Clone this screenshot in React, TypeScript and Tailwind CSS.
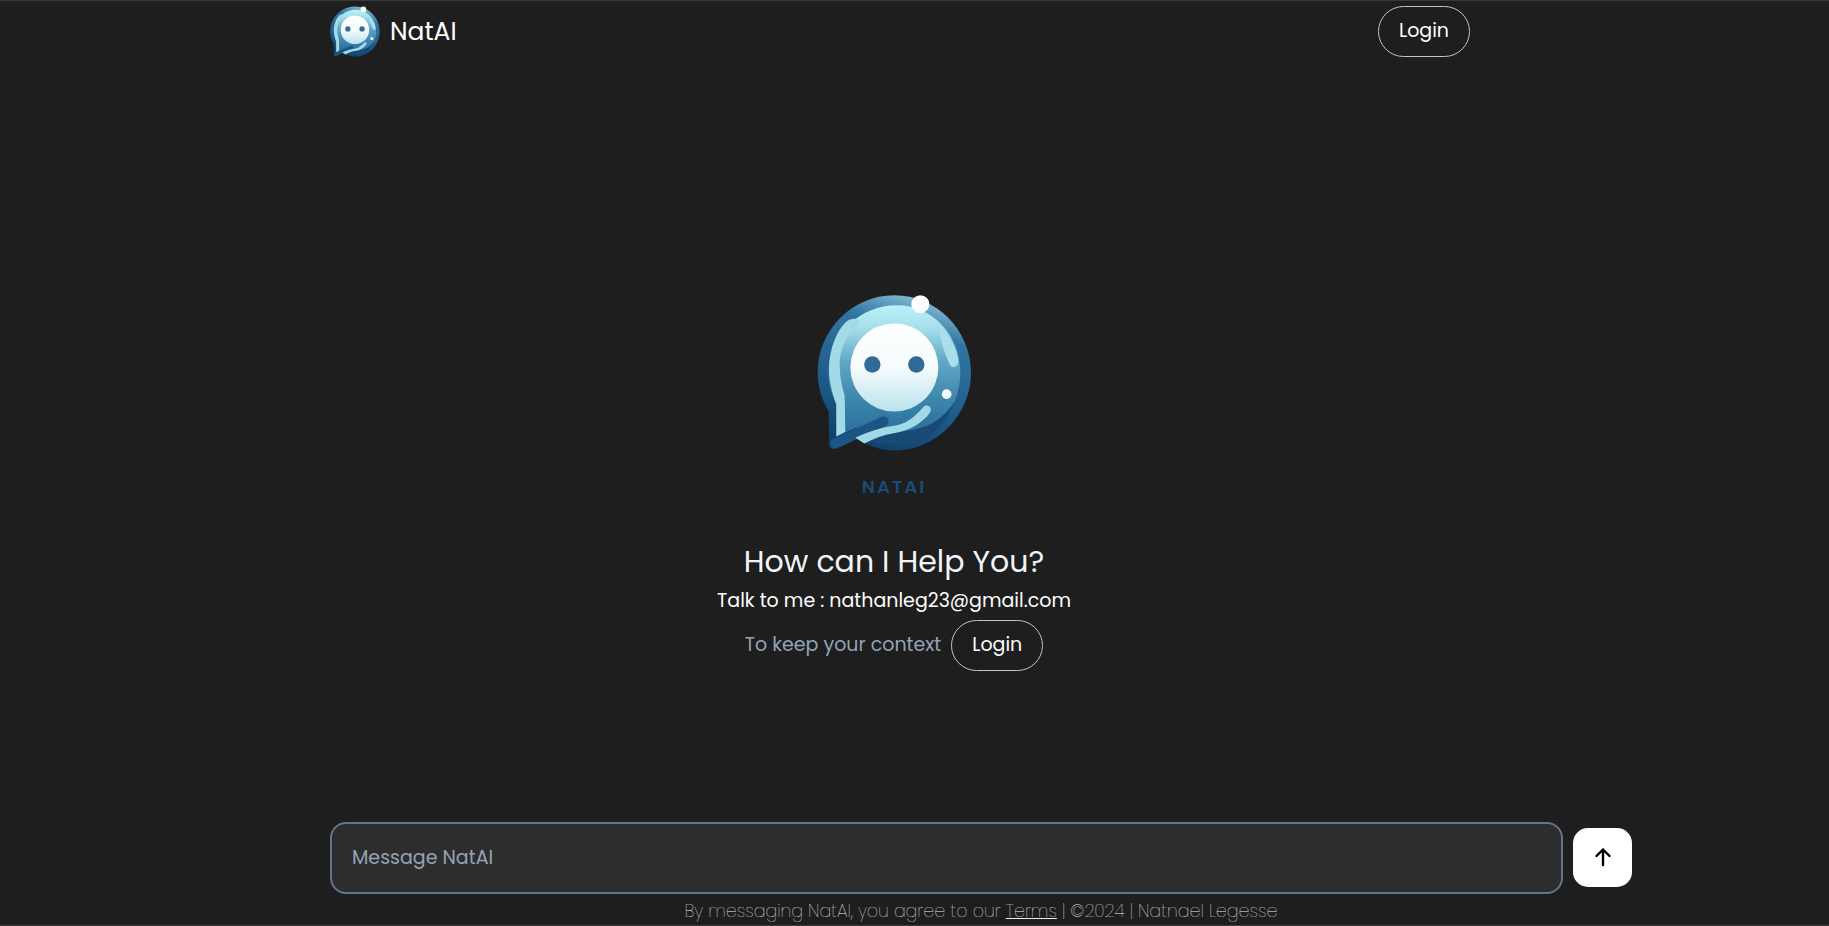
import React from "react";

function Logo({ id, viewBox, className }: { id: string; viewBox: string; className: string }) {
  return (
    <svg viewBox={viewBox} className={className} fill="none">
      <defs>
        <linearGradient id={id + "o"} x1="0.65" y1="0" x2="0.35" y2="1">
          <stop offset="0" stopColor="#86bfd4" />
          <stop offset="0.22" stopColor="#3175a3" />
          <stop offset="0.65" stopColor="#1f5c8b" />
          <stop offset="1" stopColor="#103f6a" />
        </linearGradient>
        <linearGradient id={id + "i"} x1="0" y1="0" x2="0" y2="1">
          <stop offset="0" stopColor="#bcf0f7" />
          <stop offset="0.16" stopColor="#a6e0ec" />
          <stop offset="0.42" stopColor="#5da6c4" />
          <stop offset="0.72" stopColor="#3a83a9" />
          <stop offset="1" stopColor="#266896" />
        </linearGradient>
        <linearGradient id={id + "f"} x1="0" y1="0" x2="0" y2="1">
          <stop offset="0" stopColor="#ffffff" />
          <stop offset="0.5" stopColor="#f6fbfc" />
          <stop offset="1" stopColor="#b9e2ec" />
        </linearGradient>
      </defs>
      <path
        d="M282 48C155 48 52 153 52 280C52 322 64 362 85 396L86 495C86 507 98 512 108 506L168 478C204 501 242 514 282 514C409 514 512 407 512 280C512 153 409 48 282 48Z"
        fill={`url(#${id}o)`}
      />
      <path
        d="M290 78C176 78 85 168 85 280C85 316 94 345 108 375L108 472L166 446C200 474 240 490 282 490C394 490 480 396 480 280C480 168 396 78 290 78Z"
        fill={`url(#${id}i)`}
      />
      <path d="M172 470C230 503 320 505 372 478C410 455 440 425 462 370C430 415 395 440 340 452C290 462 230 462 172 470Z" fill="#174a75" />
      <path
        d="M178 127C170 114 150 118 138 128C108 155 88 210 86 262C85 300 96 345 108 375L108 472L135 458L133 350C124 320 118 290 118 258C118 215 135 170 172 140C176 136 180 132 178 127Z"
        fill="#a3dae7"
      />
      <path d="M417 150C420 190 438 232 448 255C455 270 476 264 474 245C472 210 445 165 417 135Z" fill="#a9deea" />
      <path d="M104 494L250 426" stroke="#1c5484" strokeWidth="30" strokeLinecap="round" />
      <path
        d="M165 476C200 458 240 445 290 438C325 432 350 405 370 383C382 372 398 386 389 400C368 430 330 455 280 462C250 466 222 478 192 493Z"
        fill="#a2d9e6"
      />
      <circle cx="282" cy="265" r="132" fill={`url(#${id}f)`} />
      <circle cx="216" cy="256" r="24.5" fill="#2f6a98" />
      <circle cx="348" cy="256" r="24.5" fill="#2f6a98" />
      <circle cx="360" cy="75" r="27" fill="#fbfdfe" />
      <circle cx="439" cy="345" r="14.5" fill="#f5fbfc" />
    </svg>
  );
}

const font = "font-['Poppins','Inter','Liberation_Sans',sans-serif]";

function LoginButton() {
  return (
    <button className="w-[92px] h-[51px] rounded-[26px] border border-[#c4c4c4] text-white text-[19px] font-normal flex items-center justify-center">
      Login
    </button>
  );
}

export default function App() {
  return (
    <div className={`h-[926px] flex flex-col bg-[#1e1e1e] border-t border-t-[#3a3a3a] border-b border-b-[#3a3a3a] overflow-hidden ${font}`}>
      <header className="ml-[330px] w-[1140px] h-[60px] pt-[5px] flex items-start justify-between">
        <div className="flex items-center gap-[10px]">
          <Logo id="s" viewBox="50 45 465 470" className="w-[50px] h-[51px]" />
          <span className="text-white text-[25px] leading-[50px]">NatAI</span>
        </div>
        <LoginButton />
      </header>

      <main className="ml-[330px] w-[1128px] flex-1 flex flex-col items-center pt-[233px]">
        <Logo id="l" viewBox="50 45 465 470" className="w-[155px] h-[157px]" />
        <div className="mt-[26px] text-[#1d4a75] text-[18px] leading-[20px] font-semibold tracking-[2px]">NATAI</div>
        <h1 className="mt-[42px] text-[#f1f5f9] text-[30px] leading-[45px]">How can I Help You?</h1>
        <p className="mt-[3px] text-white text-[19px] leading-[27px]">Talk to me : nathanleg23@gmail.com</p>
        <div className="mt-[6px] flex items-center gap-[10px]">
          <span className="text-[#94a3b8] text-[19px]">To keep your context</span>
          <LoginButton />
        </div>
      </main>

      <div className="ml-[330px] w-[1302px] flex items-center gap-[10px]">
        <div className="flex-1 h-[72px] rounded-[16px] border-2 border-[#64748b] bg-[#2d2d2d] flex items-center pl-[20px]">
          <span className="text-[#94a3b8] text-[19px]">Message NatAI</span>
        </div>
        <button className="w-[59px] h-[59px] mb-[2px] rounded-[15px] bg-white flex items-center justify-center">
          <svg viewBox="0 0 24 24" className="w-[24px] h-[24px]" fill="none" stroke="#000" strokeWidth="2.4" strokeLinecap="round" strokeLinejoin="round">
            <path d="M12 20V4.5M5.5 11L12 4.5l6.5 6.5" />
          </svg>
        </button>
      </div>
      <footer className="ml-[330px] w-[1302px] h-[31px] pt-[2px] text-center text-[#eceef0] text-[17.5px] font-extralight leading-[30px]">
        By messaging NatAI, you agree to our <span className="underline">Terms</span> | ©2024 | Natnael Legesse
      </footer>
    </div>
  );
}
